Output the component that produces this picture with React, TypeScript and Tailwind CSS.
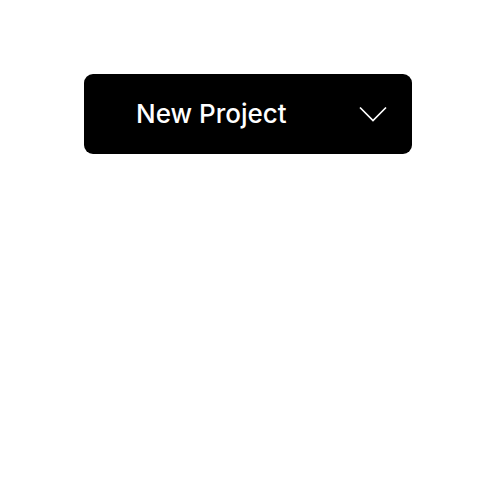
export default function App() {
  return (
    <div className="min-h-[500px] bg-white pt-[74px] pl-[84px]" style={{ fontFamily: "Inter, 'Noto Sans', sans-serif" }}>
      <button
        type="button"
        className="flex h-[80px] w-[328px] items-center justify-between rounded-[9px] bg-black pl-[52px] pr-[25px] text-white"
      >
        <span className="text-[26px] font-[450] leading-none">New Project</span>
        <svg width="28" height="16" viewBox="0 0 28 16" fill="none" className="block">
          <path d="M1 1.5L14 14.5L27 1.5" stroke="white" strokeWidth="1.7" />
        </svg>
      </button>
    </div>
  );
}
